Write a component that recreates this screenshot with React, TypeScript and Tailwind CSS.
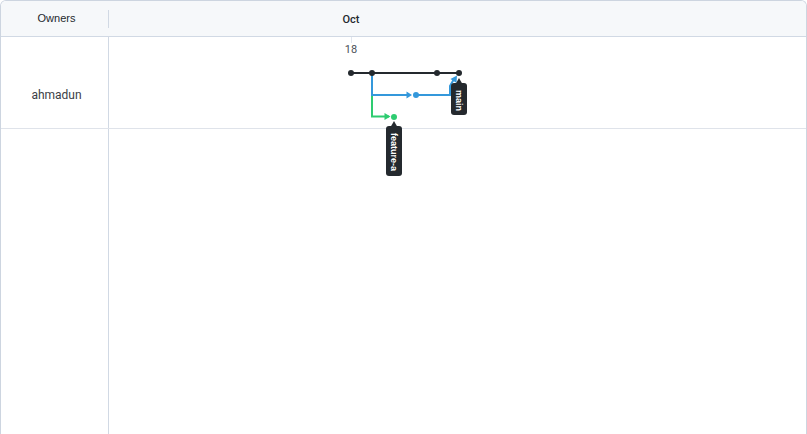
const INK = "#24292e";
const BLUE = "#3498db";
const GREEN = "#2ecc71";

type Point = { x: number; y: number; color: string };

const commits: Point[] = [
  { x: 12, y: 36, color: INK },
  { x: 33, y: 36, color: INK },
  { x: 98, y: 36, color: INK },
  { x: 120, y: 36, color: INK },
  { x: 77, y: 58, color: BLUE },
  { x: 55, y: 80, color: GREEN },
];

function BranchLabel({ x, y, length, name }: { x: number; y: number; length: number; name: string }) {
  return (
    <g transform={`translate(${x} ${y})`}>
      <path d="M0 0 L4 7 L-4 7 Z" fill={INK} />
      <rect x="-8" y="5" width="16" height={length} rx="3" fill={INK} />
      <text
        transform="translate(-3 12) rotate(90)"
        fill="#ffffff"
        className="font-['Liberation_Sans',Arial,sans-serif] text-[9px] font-bold"
      >
        {name}
      </text>
    </g>
  );
}

function NetworkGraph() {
  return (
    <svg width="140" height="91" className="block overflow-visible" role="img" aria-label="Commit network">
      <path d="M12.5 0 V6" stroke="#e1e6ee" fill="none" />
      <text
        x="12"
        y="16"
        textAnchor="middle"
        fill="#4b5157"
        className="font-['Roboto','Liberation_Sans',sans-serif] text-[11px]"
      >
        18
      </text>
      <path d="M33 36 V79.500 H50" stroke={GREEN} strokeWidth="2" fill="none" />
      <path d="M45.500 76 L51.500 79.500 L45.500 83 Z" fill={GREEN} />
      <path d="M33 36 V58 H70" stroke={BLUE} strokeWidth="2" fill="none" />
      <path d="M67.500 54.500 L73 58 L67.500 61.500 Z" fill={BLUE} />
      <path d="M77 58 H111 V49 L115 42" stroke={BLUE} strokeWidth="2" fill="none" />
      <path d="M111.500 42 L118 38.500 L117.500 46 Z" fill={BLUE} />
      <path d="M12 36 H120" stroke={INK} strokeWidth="2" />
      {commits.map((c) => (
        <circle key={`${c.x}-${c.y}`} cx={c.x} cy={c.y} r="3" fill={c.color} />
      ))}
      <BranchLabel x={120} y={41} length={32} name="main" />
      <BranchLabel x={55} y={84} length={50} name="feature-a" />
    </svg>
  );
}

export default function App() {
  return (
    <main className="flex h-screen flex-col overflow-hidden rounded-t-md border border-b-0 border-[#cdd5e0] bg-white font-['Roboto','Liberation_Sans',sans-serif] text-[#24292e]">
      <header className="flex h-9 shrink-0 items-center border-b border-[#d1d9e4] bg-[#f6f8fa]">
        <div className="flex h-[18px] w-[108px] shrink-0 items-center justify-center border-r border-[#d1d9e4] pl-1 text-[11px] font-['Liberation_Sans',Arial,sans-serif]">
          Owners
        </div>
        <div className="flex-1 pt-1 pl-[230px]">
          <div className="w-6 text-center text-[11px] font-medium">Oct</div>
        </div>
      </header>
      <section className="flex shrink-0 border-b border-[#dfe3ea]">
        <div className="flex w-[108px] shrink-0 items-center justify-center border-r border-[#d1d9e4] pt-6 pl-1 text-[12px] text-[#3b4046]">
          ahmadun
        </div>
        <div className="relative z-10 flex-1 pl-[230px]">
          <NetworkGraph />
        </div>
      </section>
      <div className="w-[108px] flex-1 border-r border-[#d1d9e4]" />
    </main>
  );
}
